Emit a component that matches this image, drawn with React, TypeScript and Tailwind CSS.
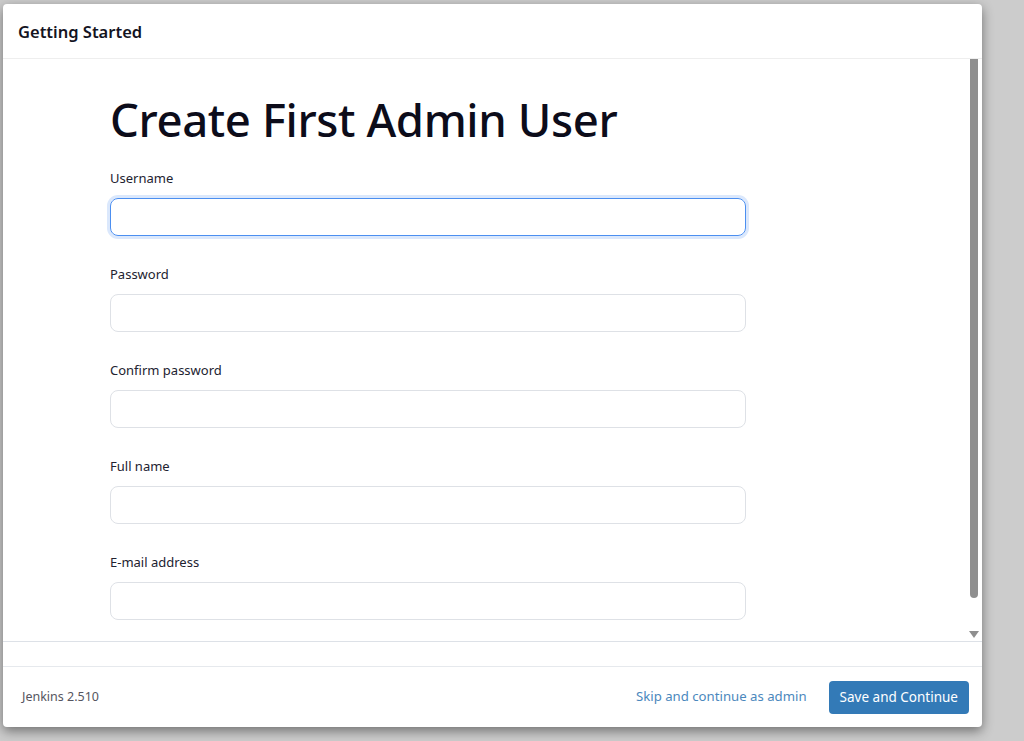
import { useState } from 'react';

const fields = [
  { id: 'username', label: 'Username', type: 'text' },
  { id: 'password1', label: 'Password', type: 'password' },
  { id: 'password2', label: 'Confirm password', type: 'password' },
  { id: 'fullname', label: 'Full name', type: 'text' },
  { id: 'email', label: 'E-mail address', type: 'email' },
];

export default function App() {
  const [values, setValues] = useState<Record<string, string>>({});

  return (
    <div
      className="h-[741px] w-[1024px] overflow-hidden bg-[#cccccc] pl-[3px] pt-[4px]"
      style={{ fontFamily: '"Noto Sans", "Open Sans", sans-serif' }}
    >
      <div className="flex h-[723px] w-[979px] flex-col overflow-hidden rounded-[4px] bg-white shadow-[0_4px_12px_rgba(0,0,0,0.45)]">
        <header className="flex h-[55px] shrink-0 items-center border-b border-[#eeeeee] pl-[15px] pt-[2px]">
          <h2 className="text-[16.5px] font-semibold text-[#14141f]">Getting Started</h2>
        </header>

        <div className="flex h-[583px] shrink-0 border-b border-[#dde1e7]">
          <div className="flex-1 pl-[107px] pt-[31px]">
            <h1 className="text-[45.5px] font-medium leading-[58px] tracking-[-0.4px] text-[#0c0c1a]">
              Create First Admin User
            </h1>
            <form className="mt-[20px] flex w-[636px] flex-col gap-[28px]">
              {fields.map((field, i) => (
                <div key={field.id} className="flex flex-col gap-[10px]">
                  <label htmlFor={field.id} className="text-[13px] leading-[20px] text-[#222230]">
                    {field.label}
                  </label>
                  <input
                    id={field.id}
                    type={field.type}
                    value={values[field.id] ?? ''}
                    onChange={(e) => setValues({ ...values, [field.id]: e.target.value })}
                    className={
                      i === 0
                        ? 'h-[38px] rounded-[8px] border border-[#4c8ff0] px-3 text-sm outline-none ring-[3px] ring-[#dbe8fc]'
                        : 'h-[38px] rounded-[8px] border border-[#dee1e6] px-3 text-sm outline-none'
                    }
                  />
                </div>
              ))}
            </form>
          </div>
          <div className="flex w-[16px] shrink-0 flex-col items-center pb-[3px]">
            <div className="h-[539px] w-[8px] rounded-b-[4px] bg-[#8f8f8f]" />
            <div className="flex-1" />
            <svg width="10" height="7" viewBox="0 0 10 7" className="mr-[1px]">
              <path d="M0 0 H10 L5 7 Z" fill="#8f8f8f" />
            </svg>
          </div>
        </div>

        <div className="h-[25px] shrink-0 border-b border-[#e6e9ed]" />

        <footer className="flex flex-1 items-center justify-between pl-[19px] pr-[13px]">
          <span className="text-[12.5px] text-[#555560]">Jenkins 2.510</span>
          <div className="flex items-center gap-[22px]">
            <a href="#" className="text-[13.2px] text-[#4b88bd]">
              Skip and continue as admin
            </a>
            <button
              type="button"
              className="h-[33px] rounded-[4px] bg-[#337ab7] px-[11px] text-[13.5px] text-white"
            >
              Save and Continue
            </button>
          </div>
        </footer>
      </div>
    </div>
  );
}
